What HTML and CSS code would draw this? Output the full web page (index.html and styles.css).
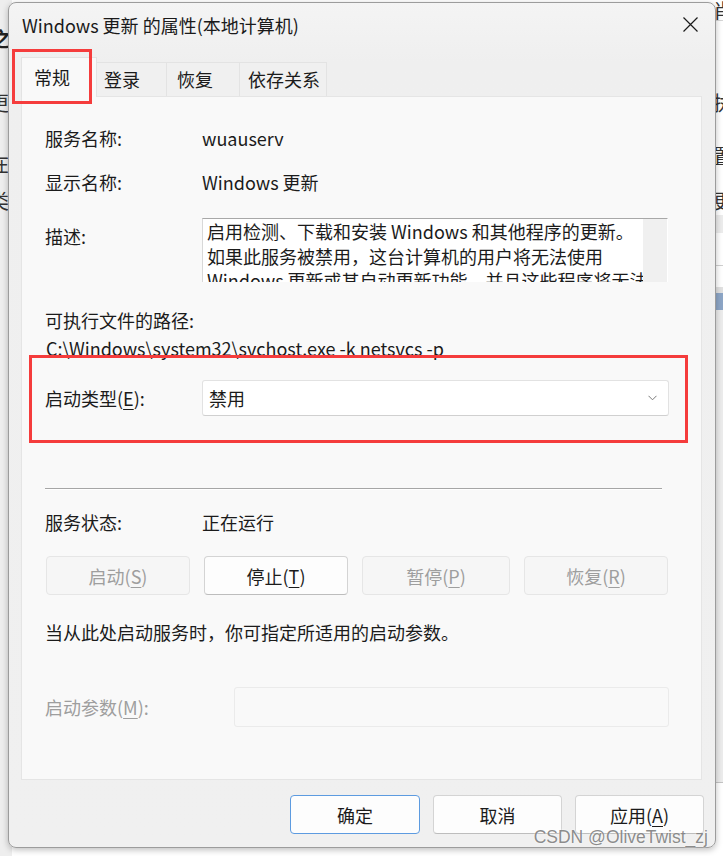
FILE: index.html
```html
<!DOCTYPE html>
<html lang="zh-CN">
<head>
    <meta charset="UTF-8">
    <meta name="viewport" content="width=device-width, initial-scale=1.0">
    <title>Windows 更新 的属性(本地计算机)</title>
    <link rel="stylesheet" href="styles.css">
</head>
<body>
    <div class="desk">
        <!-- bits of the window behind -->
        <span class="bg-char" style="left:-9px;top:26px">之</span>
        <span class="bg-char light" style="left:-11px;top:90px">更</span>
        <span class="bg-char light" style="left:-11px;top:151px">在</span>
        <span class="bg-char light" style="left:-11px;top:188px">类</span>
        <span class="bg-char light" style="left:713px;top:-2px">肖</span>
        <span class="bg-char light" style="left:713px;top:90px">执</span>
        <span class="bg-char light" style="left:713px;top:143px">置</span>
        <span class="bg-char light" style="left:713px;top:188px">更</span>
        <div class="bg-band" style="top:20px;height:1px;background:#d6d6d6"></div>
        <div class="bg-band" style="top:215px;height:18px;background:#ececec"></div>
        <div class="bg-band" style="top:265px;height:1px;background:#cfcfcf"></div>
        <div class="bg-band" style="top:287px;height:6px;background:#e1e1e1"></div>
        <div class="bg-band" style="top:293px;height:17px;background:#8da6c6"></div>
        <div class="bg-band" style="top:310px;height:472px;background:#ececec"></div>
        <div class="bg-band" style="top:782px;height:1px;background:#c4c4c4"></div>

        <!-- Dialog -->
        <div class="window">
            <div class="titlebar">
                <span class="title">Windows 更新 的属性(本地计算机)</span>
                <button class="close-button" aria-label="关闭">
                    <svg width="15" height="15" viewBox="0 0 15 15">
                        <path d="M0.5 0.5 L14.5 14.5 M14.5 0.5 L0.5 14.5" stroke="#1a1a1a" stroke-width="1.2" fill="none"/>
                    </svg>
                </button>
            </div>

            <div class="tabs">
                <div class="tab tab-general active">常规</div>
                <div class="tab tab-logon">登录</div>
                <div class="tab tab-recovery">恢复</div>
                <div class="tab tab-deps">依存关系</div>
            </div>

            <div class="panel">
                <div class="row">
                    <span class="label">服务名称:</span>
                    <span class="value">wuauserv</span>
                </div>
                <div class="row row-display">
                    <span class="label">显示名称:</span>
                    <span class="value">Windows 更新</span>
                </div>
                <div class="row row-desc">
                    <span class="label label-desc">描述:</span>
                    <div class="desc-box">
                        <div class="desc-text">启用检测、下载和安装 Windows 和其他程序的更新。<br>如果此服务被禁用，这台计算机的用户将无法使用<br>Windows 更新或其自动更新功能，并且这些程序将无法使用</div>
                        <div class="scroll-track"></div>
                    </div>
                </div>
                <div class="path-label">可执行文件的路径:</div>
                <div class="path-value">C:\Windows\system32\svchost.exe -k netsvcs -p</div>

                <div class="row row-startup">
                    <span class="label">启动类型(<u>E</u>):</span>
                    <div class="select">
                        <span>禁用</span>
                        <svg class="chevron" width="9" height="6" viewBox="0 0 9 6">
                            <path d="M0.5 0.8 L4.5 4.8 L8.5 0.8" stroke="#7a7a7a" stroke-width="1" fill="none"/>
                        </svg>
                    </div>
                </div>

                <div class="separator"></div>

                <div class="row row-status">
                    <span class="label">服务状态:</span>
                    <span class="value">正在运行</span>
                </div>

                <div class="service-buttons">
                    <button class="btn disabled btn-start">启动(<u>S</u>)</button>
                    <button class="btn btn-stop">停止(<u>T</u>)</button>
                    <button class="btn disabled btn-pause">暂停(<u>P</u>)</button>
                    <button class="btn disabled btn-resume">恢复(<u>R</u>)</button>
                </div>

                <div class="hint">当从此处启动服务时，你可指定所适用的启动参数。</div>

                <div class="row row-params">
                    <span class="label label-params">启动参数(<u>M</u>):</span>
                    <div class="param-input"></div>
                </div>
            </div>

            <div class="footer">
                <button class="btn dlg-btn default">确定</button>
                <button class="btn dlg-btn">取消</button>
                <button class="btn dlg-btn">应用(<u>A</u>)</button>
            </div>

            <!-- red highlight boxes from the screenshot -->
            <div class="mark mark-tab"></div>
            <div class="mark mark-startup"></div>
        </div>

        <div class="watermark">CSDN @OliveTwist_zj</div>
    </div>
</body>
</html>
```

FILE: styles.css
```css
/* Global */
* {
    box-sizing: border-box;
}

body {
    margin: 0;
    padding: 0;
    font-family: "Noto Sans CJK SC", "Noto Sans", sans-serif;
    font-size: 18px;
    color: #1b1b1b;
}

u {
    text-decoration-thickness: 1px;
    text-underline-offset: 3px;
}

/* Desktop behind */
.desk {
    position: relative;
    width: 723px;
    height: 856px;
    overflow: hidden;
    background: linear-gradient(to right, #eeeeee 0, #eeeeee 12px, #ffffff 12px);
}

.bg-char {
    position: absolute;
    font-size: 20px;
    line-height: 26px;
    color: #222;
    font-weight: bold;
}

.bg-char.light {
    font-weight: normal;
    color: #333;
}

.bg-band {
    position: absolute;
    left: 716px;
    width: 7px;
}

/* Window */
.window {
    position: absolute;
    left: 8px;
    top: 2px;
    width: 708px;
    height: 846px;
    background: linear-gradient(to bottom, #f4f4f4 0, #efefef 60px, #f0f0f0 100%);
    border: 1px solid #9c9c9c;
    border-radius: 8px;
    box-shadow: 0 2px 6px rgba(0, 0, 0, 0.25);
    display: flex;
    flex-direction: column;
}

.titlebar {
    height: 47px;
    display: flex;
    align-items: center;
    justify-content: space-between;
    padding: 0 17px 4px 13px;
}

.title {
    font-size: 18px;
    line-height: 24px;
    color: #1a1a1a;
}

.close-button {
    background: none;
    border: none;
    padding: 0;
    width: 15px;
    height: 15px;
    display: flex;
    cursor: pointer;
}

/* Tabs */
.tabs {
    height: 46px;
    margin-left: 12px;
    display: flex;
    align-items: flex-end;
}

.tab {
    height: 34px;
    font-size: 18px;
    line-height: 32px;
    padding-left: 8px;
    background: #f0f0f0;
    border: 1px solid #e3e3e3;
    border-bottom: none;
    border-left: none;
}

.tab.active {
    height: 40px;
    line-height: 38px;
    padding-left: 12px;
    background: #f9f9f9;
    border-left: 1px solid #e3e3e3;
    position: relative;
    z-index: 1;
    margin-bottom: -1px;
}

.tab-general { width: 76px; }
.tab-logon { width: 70px; padding-left: 7px; }
.tab-recovery { width: 73px; padding-left: 10px; }
.tab-deps { width: 87px; padding-left: 8px; }

/* Panel */
.panel {
    height: 684px;
    margin: 0 13px 0 12px;
    background: #f9f9f9;
    border: 1px solid #e5e5e5;
    padding: 29px 0 0 23px;
}

.row {
    display: flex;
    align-items: center;
    line-height: 24px;
}

.label {
    width: 157px;
    flex-shrink: 0;
}

.row-display {
    margin-top: 20px;
}

.row-desc {
    margin-top: 24px;
    align-items: flex-start;
}

.label-desc {
    padding-top: 6px;
}

.desc-box {
    width: 466px;
    height: 64px;
    background: #ffffff;
    border-top: 1px solid #a8a8a8;
    border-left: 1px solid #d8d8d8;
    border-right: 1px solid #ffffff;
    display: flex;
    overflow: hidden;
}

.desc-text {
    flex: 1;
    padding: 0 0 0 4px;
    line-height: 24.5px;
    white-space: nowrap;
    overflow: hidden;
}

.scroll-track {
    width: 24px;
    background: #f0f0f0;
    flex-shrink: 0;
}

.path-label {
    margin-top: 26px;
    line-height: 24px;
}

.path-value {
    margin-top: 4px;
    line-height: 24px;
    padding-left: 1px;
}

.row-startup {
    margin-top: 20px;
}

.select {
    width: 467px;
    height: 36px;
    background: #ffffff;
    border: 1px solid #e2e2e2;
    border-bottom-color: #d0d0d0;
    border-radius: 3px;
    display: flex;
    align-items: center;
    justify-content: space-between;
    padding: 0 11px 0 6px;
}

.separator {
    width: 617px;
    height: 2px;
    margin-top: 72px;
    border-top: 1px solid #a6a6a6;
    border-bottom: 1px solid #ffffff;
}

.row-status {
    margin-top: 20px;
}

/* Buttons */
.service-buttons {
    width: 623px;
    margin-top: 22px;
    padding-left: 1px;
    display: flex;
    justify-content: space-between;
}

.btn {
    font-family: inherit;
    font-size: 18px;
    color: #1b1b1b;
    height: 39px;
    background: #fdfdfd;
    border: 1px solid #d4d4d4;
    border-bottom-color: #bdbdbd;
    border-radius: 4px;
    padding: 0;
    cursor: pointer;
}

.btn.disabled {
    color: #9e9e9e;
    background: #f6f6f6;
    border-color: #e6e6e6;
    cursor: default;
}

.btn-start,
.btn-stop,
.btn-resume {
    width: 144px;
}

.btn-pause {
    width: 148px;
}

.hint {
    margin-top: 25px;
    line-height: 24px;
}

.row-params {
    margin-top: 43px;
}

.label-params {
    width: 189px;
    color: #9e9e9e;
}

.param-input {
    width: 435px;
    height: 40px;
    background: #f9f9f9;
    border: 1px solid #ebebeb;
    border-radius: 3px;
}

/* Footer */
.footer {
    flex: 1;
    display: flex;
    justify-content: flex-end;
    align-items: flex-start;
    gap: 13px;
    padding: 15px 11px 0 0;
}

.dlg-btn {
    width: 129px;
}

.dlg-btn.default {
    width: 130px;
    border: 1px solid #5d9be0;
}

/* Red highlight boxes */
.mark {
    position: absolute;
    border: 3px solid #f53c3c;
    z-index: 2;
}

.mark-tab {
    left: 3px;
    top: 46px;
    width: 80px;
    height: 55px;
}

.mark-startup {
    left: 20px;
    top: 352px;
    width: 659px;
    height: 88px;
}

/* Watermark */
.watermark {
    position: absolute;
    right: 15px;
    top: 826px;
    font-family: "Liberation Sans", Arial, sans-serif;
    font-size: 17.5px;
    line-height: 22px;
    color: rgba(120, 120, 120, 0.85);
    text-shadow: 0 0 2px rgba(255, 255, 255, 0.9);
    z-index: 3;
}
```
